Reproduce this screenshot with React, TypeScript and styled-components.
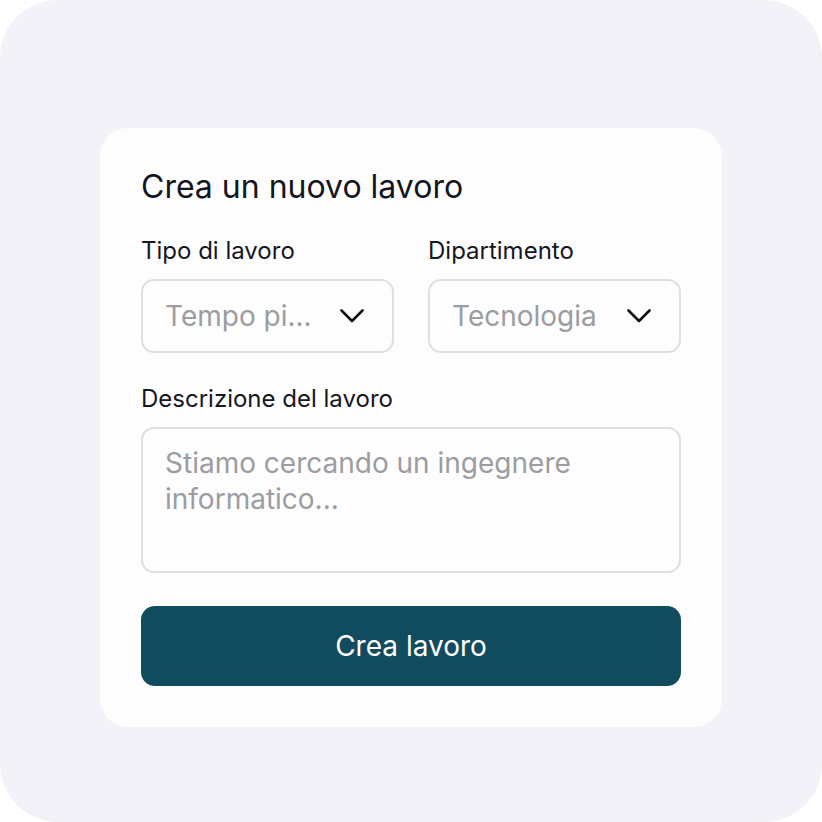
import React from 'react';
import styled, { createGlobalStyle } from 'styled-components';

const GlobalStyle = createGlobalStyle`
  html, body {
    margin: 0;
    padding: 0;
    background: #ffffff;
  }
  body {
    font-family: Inter, 'Noto Sans', sans-serif;
  }
`;

const Page = styled.div`
  width: 822px;
  height: 822px;
  box-sizing: border-box;
  background: #f3f2f8;
  border-radius: 58px;
  padding-top: 128px;
  display: flex;
  align-items: flex-start;
  justify-content: center;
`;

const Card = styled.form`
  width: 622px;
  box-sizing: border-box;
  background: #fdfdfe;
  border-radius: 28px;
  padding: 40px 41px 41px;
  display: flex;
  flex-direction: column;
`;

const Title = styled.h1`
  margin: 0 0 30px;
  font-size: 32px;
  line-height: 38px;
  font-weight: 400;
  color: #131520;
`;

const Row = styled.div`
  display: grid;
  grid-template-columns: 1fr 1fr;
  column-gap: 34px;
  margin-bottom: 31px;
`;

const Field = styled.label`
  display: flex;
  flex-direction: column;
  gap: 14px;
`;

const Label = styled.span`
  font-size: 24px;
  line-height: 29px;
  color: #16171f;
`;

const SelectBox = styled.div`
  height: 74px;
  box-sizing: border-box;
  border: 2px solid #dfdfe2;
  border-radius: 13px;
  background: #fdfdfe;
  display: flex;
  align-items: center;
  padding: 0 28px 0 22px;
  gap: 10px;
`;

const Placeholder = styled.span`
  flex: 1;
  font-size: 28px;
  color: #9c9ca1;
  white-space: nowrap;
  overflow: hidden;
`;

const TextArea = styled.div`
  height: 146px;
  box-sizing: border-box;
  border: 2px solid #dfdfe2;
  border-radius: 13px;
  padding: 16px 22px;
  font-size: 28px;
  line-height: 36px;
  color: #9c9ca1;
`;

const Button = styled.button`
  margin-top: 33px;
  height: 80px;
  border: none;
  border-radius: 14px;
  background: #114c5e;
  color: #ffffff;
  font-family: Inter, 'Noto Sans', sans-serif;
  font-size: 28px;
  cursor: pointer;
`;

const Chevron = () => (
  <svg width="24" height="14" viewBox="0 0 24 14" fill="none">
    <path d="M1.5 1.5 L12 12 L22.5 1.5" stroke="#111" strokeWidth="2.6" strokeLinecap="round" strokeLinejoin="round" />
  </svg>
);

const Select = ({ label, value }: { label: string; value: string }) => (
  <Field>
    <Label>{label}</Label>
    <SelectBox>
      <Placeholder>{value}</Placeholder>
      <Chevron />
    </SelectBox>
  </Field>
);

export default function App() {
  return (
    <>
      <GlobalStyle />
      <Page>
        <Card onSubmit={(e) => e.preventDefault()}>
          <Title>Crea un nuovo lavoro</Title>
          <Row>
            <Select label="Tipo di lavoro" value="Tempo pi..." />
            <Select label="Dipartimento" value="Tecnologia" />
          </Row>
          <Field>
            <Label>Descrizione del lavoro</Label>
            <TextArea>
              Stiamo cercando un ingegnere
              <br />
              informatico...
            </TextArea>
          </Field>
          <Button type="submit">Crea lavoro</Button>
        </Card>
      </Page>
    </>
  );
}
